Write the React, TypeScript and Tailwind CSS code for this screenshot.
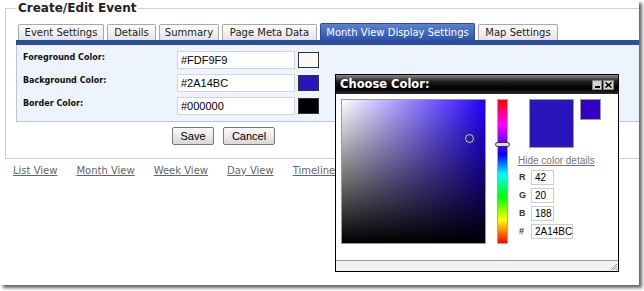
import React from "react";

const tabs = [
  { label: "Event Settings", w: "w-[86px]" },
  { label: "Details", w: "w-[49px]" },
  { label: "Summary", w: "w-[60px]" },
  { label: "Page Meta Data", w: "w-[95px]" },
  { label: "Month View Display Settings", w: "w-[155px]", active: true },
  { label: "Map Settings", w: "w-[80px]" },
];

const colorRows = [
  { label: "Foreground Color:", value: "#FDF9F9", swatch: "bg-[#fdf9f9]" },
  { label: "Background Color:", value: "#2A14BC", swatch: "bg-[#2a14bc]" },
  { label: "Border Color:", value: "#000000", swatch: "bg-[#000000]" },
];

const views = ["List View", "Month View", "Week View", "Day View", "Timeline"];

const rgbRows = [
  { label: "R", value: "42", w: "w-[23px]" },
  { label: "G", value: "20", w: "w-[23px]" },
  { label: "B", value: "188", w: "w-[23px]" },
  { label: "#", value: "2A14BC", w: "w-[42px]" },
];

const ColorDialog: React.FC = () => {
  return (
    <div className="absolute left-[335px] top-[74px] w-[284px] h-[198px] border border-black bg-white flex flex-col font-['Liberation_Sans',Arial,sans-serif]">
      {/* title bar */}
      <div className="h-[19px] flex items-center justify-between pl-[4px] pr-[4px] bg-[linear-gradient(to_bottom,#8a8a8a_0%,#1c1c1c_35%,#000_70%,#2a2a2a_100%)]">
        <span className="text-white font-bold text-[11.5px] font-['DejaVu_Sans',Verdana,sans-serif]">
          Choose Color:
        </span>
        <div className="flex gap-[1px]">
          <div className="w-[10px] h-[10px] bg-[#d6d3ce] border border-[#808080] flex items-end justify-center pb-[1px]">
            <div className="w-[5px] h-[2px] bg-black" />
          </div>
          <div className="w-[11px] h-[10px] bg-[#d6d3ce] border border-[#808080] flex items-center justify-center">
            <svg width="7" height="6" viewBox="0 0 7 6">
              <path d="M0.5 0.5 L6.5 5.5 M6.5 0.5 L0.5 5.5" stroke="#000" strokeWidth="1.6" />
            </svg>
          </div>
        </div>
      </div>

      {/* body */}
      <div className="flex-1 flex pt-[5px] pl-[5px]">
        <div className="relative w-[145px] h-[145px] border border-[#999] bg-[linear-gradient(to_top,#000,rgba(0,0,0,0)),linear-gradient(to_right,#fff,#2400ff)]">
          <div className="absolute left-[123px] top-[34px] w-[9px] h-[9px] rounded-full border border-[#ddd] outline outline-1 outline-[#333]" />
        </div>
        <div className="relative ml-[11px] w-[11px] h-[145px] border border-[#aaa] bg-[linear-gradient(to_bottom,#ff0000_0%,#ff00ff_17%,#0000ff_38%,#00ffff_52%,#00ff00_68%,#ffff00_84%,#ff0000_100%)]">
          <div className="absolute -left-[3px] top-[42px] w-[15px] h-[5px] rounded-[3px] border border-[#333] bg-[#d8d8d8]" />
        </div>
        <div className="ml-[10px] flex flex-col">
          <div className="flex items-start gap-[6px] ml-[11px]">
            <div className="w-[45px] h-[49px] bg-[#2a14bc] border border-[#999]" />
            <div className="w-[21px] h-[21px] bg-[#3300c6] border border-[#999]" />
          </div>
          <a href="#" className="mt-[7px] text-[10px] leading-[12px] text-[#777] underline">
            Hide color details
          </a>
          <div className="mt-[3px] flex flex-col gap-[3px]">
            {rgbRows.map((r) => (
              <div key={r.label} className="flex items-center">
                <span className="w-[13px] pl-[1px] text-[9px] font-bold text-[#333]">{r.label}</span>
                <div className={`${r.w} h-[15px] border border-[#ccc] bg-white text-[10px] leading-[13px] pl-[3px] text-black`}>
                  {r.value}
                </div>
              </div>
            ))}
          </div>
        </div>
      </div>

      {/* footer */}
      <div className="h-[11px] border-t border-[#999] bg-[#f2f2f2] flex justify-end items-end">
        <svg width="9" height="9" viewBox="0 0 9 9">
          <path d="M8 2 L2 8 M8 4.5 L4.5 8 M8 7 L7 8" stroke="#888" strokeWidth="1" />
        </svg>
      </div>
    </div>
  );
};

const App: React.FC = () => {
  return (
    <div className="w-[644px] h-[291px] bg-white">
      <div className="relative w-[639px] h-[285px] bg-white overflow-hidden shadow-[3px_3px_3px_rgba(0,0,0,0.6)] font-['DejaVu_Sans',Verdana,sans-serif]">
        <div className="pl-[5px]">
          <fieldset className="w-[660px] h-[159px] border border-[#cfcfcf] px-[10px]">
            <legend className="ml-0 px-[2px] text-[12px] leading-[16px] font-bold text-[#222]">
              Create/Edit Event
            </legend>
            <div className="pt-[8px] flex gap-[3px] pl-[2px]">
              {tabs.map((t) =>
                t.active ? (
                  <div
                    key={t.label}
                    className={`${t.w} h-[17px] -mt-[1px] flex items-center justify-center text-[10px] text-white border border-[#2c4b9c] border-b-0 rounded-t-[2px] bg-[linear-gradient(to_bottom,#5c80d0,#2e54ad)]`}
                  >
                    {t.label}
                  </div>
                ) : (
                  <div
                    key={t.label}
                    className={`${t.w} h-[16px] flex items-center justify-center text-[10px] text-[#222] border border-[#a9a9a9] border-b-0 rounded-t-[2px] bg-[linear-gradient(to_bottom,#ffffff,#e3e3e3)]`}
                  >
                    {t.label}
                  </div>
                )
              )}
            </div>
            <div className="h-[5px] bg-[#2c4c9e]" />
            <div className="h-[77px] bg-[#eef4fd] border border-t-0 border-[#b8c4d8] pl-[6px] pt-[6px] flex flex-col gap-[6px]">
              {colorRows.map((r) => (
                <div key={r.label} className="flex items-center h-[17px]">
                  <span className="w-[154px] text-[8px] font-bold text-[#111] -mt-[4px]">{r.label}</span>
                  <div className="w-[118px] h-[18px] bg-white border border-[#d4d4d4] pl-[3px] text-[11px] leading-[16px] text-black font-['Liberation_Sans',Arial,sans-serif]">
                    {r.value}
                  </div>
                  <div className={`ml-[3px] w-[21px] h-[16px] border border-[#333] ${r.swatch}`} />
                </div>
              ))}
            </div>
            <div className="flex gap-[9px] pl-[156px] pt-[5px] font-['Liberation_Sans',Arial,sans-serif]">
              <button className="w-[42px] h-[18px] text-[11px] leading-[14px] text-black border border-[#777] rounded-[2px] bg-[linear-gradient(to_bottom,#fafafa,#d8d8d8)]">
                Save
              </button>
              <button className="w-[52px] h-[18px] text-[11px] leading-[14px] text-black border border-[#777] rounded-[2px] bg-[linear-gradient(to_bottom,#fafafa,#d8d8d8)]">
                Cancel
              </button>
            </div>
          </fieldset>
        </div>
        <div className="flex gap-[19px] pl-[13px] pt-[4px]">
          {views.map((v) => (
            <a key={v} href="#" className="text-[10px] text-[#666] underline">
              {v}
            </a>
          ))}
        </div>
        <ColorDialog />
      </div>
    </div>
  );
};

export default App;
